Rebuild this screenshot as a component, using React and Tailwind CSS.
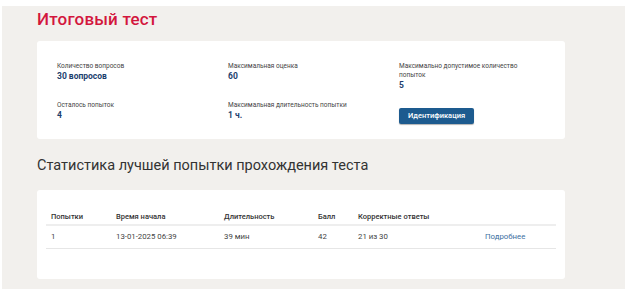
export default function App() {
  const font = { fontFamily: 'Roboto, "Noto Sans", sans-serif' };
  const cols = "grid grid-cols-[65px_108px_94px_40px_127px_1fr] pl-[5px]";
  const label = "text-[6.5px] leading-[9px] text-[#444]";
  const value = "text-[8.5px] leading-[11px] font-bold text-[#1d3f6e]";
  return (
    <div className="w-[628px] h-[301px] bg-white pt-[6px] pl-[2px]" style={font}>
      <div className="w-[623px] h-[283px] bg-[#f2f0ed] pl-[35px] flex flex-col">
        <h1 className="text-[#d3163d] text-[17px] font-medium leading-[20px] mt-[3px] tracking-[0.2px]">
          Итоговый тест
        </h1>
        <div className="mt-[12px] w-[528px] h-[98px] bg-white rounded-[3px] pl-[20px] pt-[21px] grid grid-cols-[171px_171px_1fr] grid-rows-[39px_auto]">
          <div>
            <div className={label}>Количество вопросов</div>
            <div className={value}>30 вопросов</div>
          </div>
          <div>
            <div className={label}>Максимальная оценка</div>
            <div className={value}>60</div>
          </div>
          <div>
            <div className={`${label} w-[125px]`}>Максимально допустимое количество попыток</div>
            <div className={value}>5</div>
          </div>
          <div>
            <div className={label}>Осталось попыток</div>
            <div className={value}>4</div>
          </div>
          <div>
            <div className={label}>Максимальная длительность попытки</div>
            <div className={value}>1 ч.</div>
          </div>
          <div>
            <button className="w-[75px] h-[16px] bg-[#1d5b8f] rounded-[2px] text-white text-[7.5px] font-medium leading-[16px] shadow-[0_1px_1px_rgba(0,0,0,0.3)]">
              Идентификация
            </button>
          </div>
        </div>
        <h2 className="mt-[17px] text-[14.5px] leading-[20px] text-[#333] font-normal">
          Статистика лучшей попытки прохождения теста
        </h2>
        <div className="mt-[14px] w-[528px] h-[89px] bg-white rounded-[3px] px-[9px] pt-[20px]">
          <div className={`${cols} h-[16px] items-center text-[7.5px] font-medium text-[#333] border-b-[2px] border-[#eeeeee]`}>
            <div>Попытки</div>
            <div>Время начала</div>
            <div>Длительность</div>
            <div>Балл</div>
            <div>Корректные ответы</div>
            <div></div>
          </div>
          <div className={`${cols} h-[23px] items-center text-[7.8px] text-[#444] border-b border-[#e6e6e6]`}>
            <div>1</div>
            <div>13-01-2025 06:39</div>
            <div>39 мин</div>
            <div>42</div>
            <div>21 из 30</div>
            <div className="text-[#3d6f9f]">Подробнее</div>
          </div>
        </div>
      </div>
    </div>
  );
}
